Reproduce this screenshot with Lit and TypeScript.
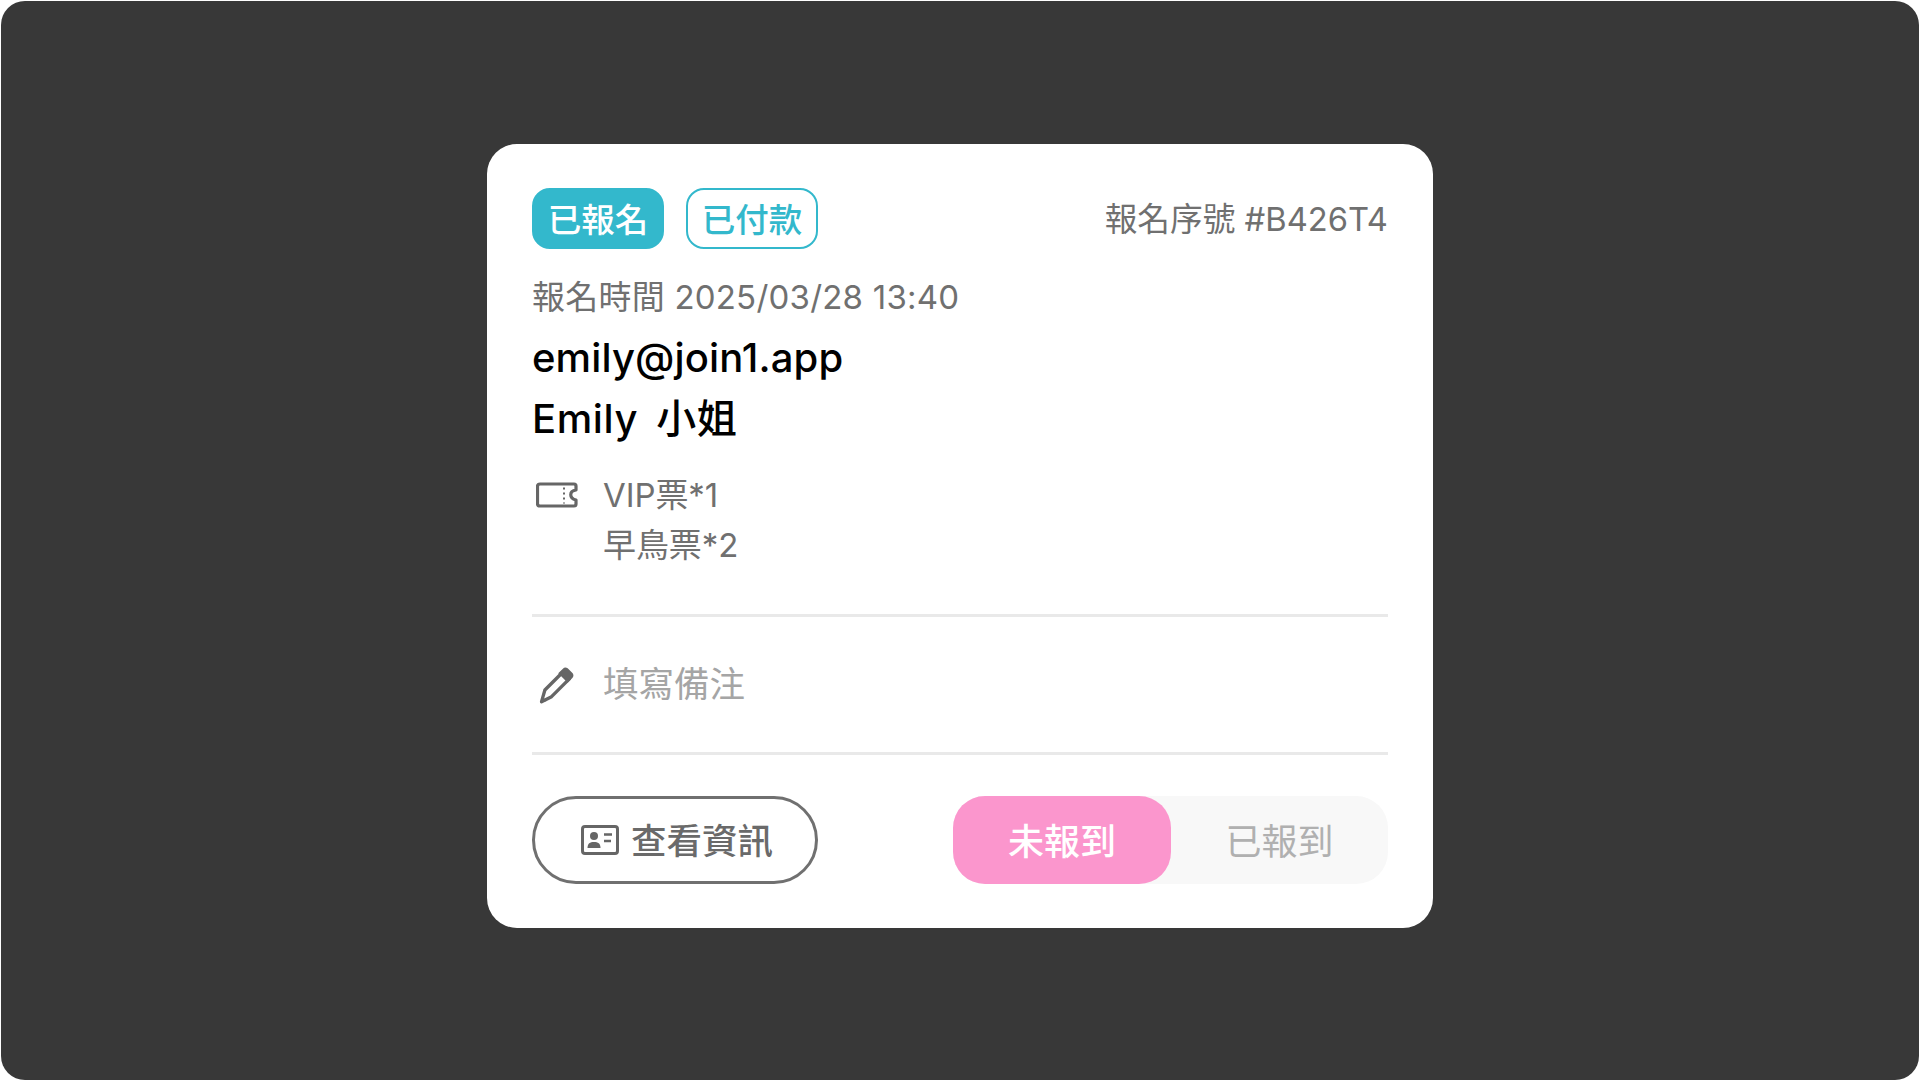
import { LitElement, html, css } from "lit";
import { customElement } from "lit/decorators.js";

@customElement("app-root")
export class AppRoot extends LitElement {
  static styles = css`
    :host { display: block; width: 1920px; height: 1081px; background: #fff; font-family: Inter, "Noto Sans CJK TC", sans-serif; }
    .frame { box-sizing: border-box; width: 1918px; height: 1079px; margin: 1px; padding-top: 143px; background: #383838; border-radius: 24px; display: flex; align-items: flex-start; justify-content: center; }
    .card { box-sizing: border-box; width: 946px; height: 784px; background: #fff; border-radius: 30px; padding: 44px 45px; display: flex; flex-direction: column; }
    .top { display: flex; align-items: center; height: 61px; gap: 22px; }
    .tag { box-sizing: border-box; width: 132px; height: 61px; padding-bottom: 2px; border-radius: 18px; display: flex; align-items: center; justify-content: center; font-size: 33.5px; font-weight: 500; border: 2.5px solid #33b8cc; }
    .tag.fill { background: #33b8cc; color: #fff; }
    .tag.line { color: #33b8cc; }
    .serial { margin-left: auto; margin-top: 1px; font-size: 32.7px; color: #707070; line-height: 40px; }
    .date { margin-top: 28px; font-size: 33px; letter-spacing: 0.22px; color: #707070; line-height: 40px; }
    .email, .name { font-size: 40px; font-weight: 500; color: #000; line-height: 58px; }
    .email { margin-top: 12px; letter-spacing: 0.12px; }
    .name { margin-top: 3px; letter-spacing: 0.6px; word-spacing: 7px; }
    .tickets { margin-top: 22px; display: flex; gap: 25px; }
    .ticket-icon { margin: 11px 0 0 4px; display: block; flex: none; }
    .tlist { font-size: 33px; color: #707070; line-height: 50px; letter-spacing: -0.1px; }
    hr { width: 100%; height: 3px; margin: 0; border: none; background: #e9e9e9; }
    .d1 { margin-top: 44px; }
    .note { height: 136px; display: flex; align-items: center; gap: 27px; font-size: 35.5px; color: #a5a5a5; }
    .note span { margin-top: -6px; }
    .pen { margin-left: 4px; display: block; }
    .foot { margin-top: 41px; display: flex; justify-content: space-between; }
    .btn { box-sizing: border-box; width: 286px; height: 88px; padding: 0 0 3px 4px; border: 3px solid #707070; border-radius: 44px; display: flex; align-items: center; justify-content: center; gap: 12px; font-size: 35.5px; font-weight: 500; color: #6a6a6a; }
    .btn svg { margin-top: 3px; }
    .toggle { width: 435px; height: 88px; background: #f8f8f8; border-radius: 32px; display: flex; }
    .opt { box-sizing: border-box; width: 217px; padding-bottom: 3px; display: flex; align-items: center; justify-content: center; font-size: 36px; color: #b0b0b0; }
    .opt.on { width: 218px; background: #fb96cd; color: #fff; font-weight: 500; border-radius: 32px; }
  `;

  render() {
    return html`<div class="frame"><div class="card">
      <div class="top">
        <div class="tag fill">已報名</div>
        <div class="tag line">已付款</div>
        <div class="serial">報名序號 #B426T4</div>
      </div>
      <div class="date">報名時間 2025/03/28 13:40</div>
      <div class="email">emily@join1.app</div>
      <div class="name">Emily 小姐</div>
      <div class="tickets">
        <svg class="ticket-icon" width="42" height="28" viewBox="0 0 42 28" fill="none" stroke="#666" stroke-width="3.2" stroke-linejoin="round">
          <path d="M4 3H38C39.5 3 40 3.5 40 5V9C33 10 33 17 40 19V23C40 24.5 39.5 25 38 25H4C2.5 25 1.5 24 1.5 22.5V5.5C1.5 4 2.5 3 4 3Z"/>
          <path d="M28 6.5V22.5" stroke-width="2" stroke-dasharray="2 3"/>
        </svg>
        <div class="tlist"><div>VIP票*1</div><div>早鳥票*2</div></div>
      </div>
      <hr class="d1" />
      <div class="note">
        <svg class="pen" width="40" height="40" viewBox="0 0 36 36">
          <path d="M5 33L8 22.5L24 6.5L30 12.5L14 28.5Z" fill="none" stroke="#666" stroke-width="3" stroke-linejoin="round"/>
          <path d="M24 3.5C25.5 2 27 2 28.5 3L33 7.5C34 9 34 10.5 32.5 12L28.5 16L20 7.5Z" fill="#666"/>
          <path d="M4 34L5.5 28.5L9.5 32.5Z" fill="#666"/>
        </svg>
        <span>填寫備注</span>
      </div>
      <hr />
      <div class="foot">
        <div class="btn">
          <svg width="38" height="30" viewBox="0 0 38 30">
            <rect x="1.5" y="1.5" width="35" height="27" rx="2.5" fill="none" stroke="#666" stroke-width="3"/>
            <circle cx="13" cy="11" r="4" fill="#666"/>
            <path d="M6.5 23C6.5 18.5 9 17 13 17C17 17 19.5 18.5 19.5 23Z" fill="#666"/>
            <path d="M23 9.5H31M23 16H30" stroke="#666" stroke-width="2.5"/>
          </svg>
          <span>查看資訊</span>
        </div>
        <div class="toggle">
          <div class="opt on">未報到</div>
          <div class="opt">已報到</div>
        </div>
      </div>
    </div></div>`;
  }
}
